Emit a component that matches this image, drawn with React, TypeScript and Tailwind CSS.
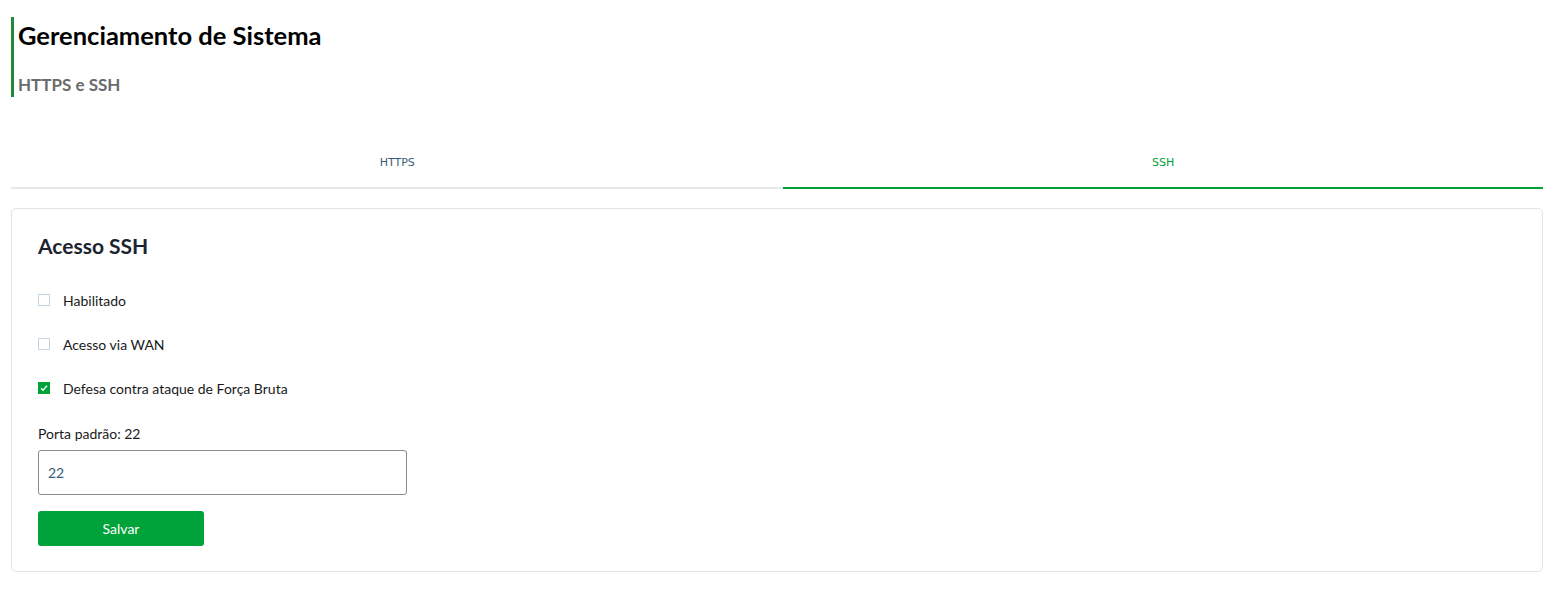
import React, { useState } from "react";

const FONT = "font-['Lato','Noto_Sans',sans-serif]";

type Opt = { label: string; checked: boolean };

const initialOpts: Opt[] = [
  { label: "Habilitado", checked: false },
  { label: "Acesso via WAN", checked: false },
  { label: "Defesa contra ataque de Força Bruta", checked: true },
];

const Checkbox: React.FC<{ checked: boolean; onClick: () => void }> = ({ checked, onClick }) => (
  <button
    type="button"
    onClick={onClick}
    className={
      checked
        ? "w-3 h-3 bg-[#00a33a] flex items-center justify-center"
        : "w-3 h-3 border border-[#c5d6e0] bg-white"
    }
  >
    {checked && (
      <svg viewBox="0 0 12 12" className="w-3 h-3">
        <path d="M3 6.2l2 2 4-4.4" fill="none" stroke="white" strokeWidth="1.3" />
      </svg>
    )}
  </button>
);

export default function App() {
  const [tab, setTab] = useState<"https" | "ssh">("ssh");
  const [opts, setOpts] = useState(initialOpts);
  const [port, setPort] = useState("22");

  return (
    <div className={`${FONT} bg-white min-h-[589px] pl-[11px] pr-[15px] pt-[17px] text-[#222]`}>
      {/* page header */}
      <div className="border-l-[3px] border-[#1e8a3c] pl-[4px] h-[80px] flex flex-col">
        <h1 className="text-[25.5px] font-bold leading-none text-black mt-[6px]">
          Gerenciamento de Sistema
        </h1>
        <h2 className="text-[17px] font-bold leading-none text-[#6b6b6b] mt-[27px]">
          HTTPS e SSH
        </h2>
      </div>

      {/* tabs */}
      <div className="flex mt-[49px] font-['DejaVu_Sans',sans-serif] text-[11px]">
        <button
          onClick={() => setTab("https")}
          className={`flex-auto h-[43px] pb-[16px] flex items-end justify-center border-b-2 ${
            tab === "https" ? "border-[#00a33a] text-[#00a33a]" : "border-[#e8e8e8] text-[#3a5c78]"
          }`}
        >
          HTTPS
        </button>
        <button
          onClick={() => setTab("ssh")}
          className={`flex-auto h-[43px] pb-[16px] flex items-end justify-center border-b-2 ${
            tab === "ssh" ? "border-[#00a33a] text-[#00a33a]" : "border-[#e8e8e8] text-[#3a5c78]"
          }`}
        >
          SSH
        </button>
      </div>

      {/* card */}
      <div className="mt-[19px] border border-[#e2e2e2] rounded-[5px] px-[26px] pt-[26px] pb-[25px]">
        <h3 className="text-[21px] font-bold text-[#1c2430] leading-none">Acesso SSH</h3>

        <div className="mt-[36px] flex flex-col gap-[28px]">
          {opts.map((o, i) => (
            <label key={o.label} className="flex items-center gap-[13px] h-[16px] text-[14px] text-[#1a1a1a]">
              <Checkbox
                checked={o.checked}
                onClick={() =>
                  setOpts(opts.map((p, j) => (j === i ? { ...p, checked: !p.checked } : p)))
                }
              />
              {o.label}
            </label>
          ))}
        </div>

        <div className="mt-[31px] text-[14px] text-[#1a1a1a] leading-none">Porta padrão: 22</div>
        <input
          value={port}
          onChange={(e) => setPort(e.target.value)}
          className="mt-[9px] w-[369px] h-[45px] border border-[#8a8a8a] rounded-[3px] px-[9px] text-[14px] text-[#3a5c78] outline-none block"
        />
        <button className="mt-[16px] w-[166px] h-[35px] bg-[#00a33a] text-white text-[14px] rounded-[3px]">
          Salvar
        </button>
      </div>
    </div>
  );
}
